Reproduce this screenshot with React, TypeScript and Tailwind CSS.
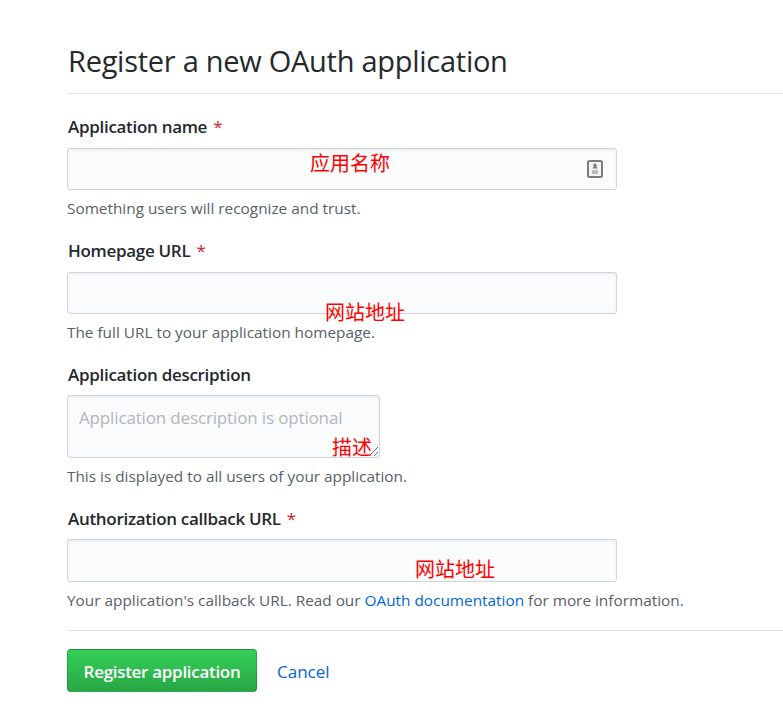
import { ReactNode } from "react";

const font = "font-['Open_Sans','Noto_Sans_CJK_SC',sans-serif]";

const Note = ({ className, children }: { className: string; children: ReactNode }) => (
  <span className={`absolute text-[20px] leading-[24px] whitespace-nowrap text-[#ff0000] font-['Noto_Sans_CJK_SC',sans-serif] ${className}`}>
    {children}
  </span>
);

const Label = ({ children, required }: { children: ReactNode; required?: boolean }) => (
  <div className="h-[24px] text-[17px] leading-[22px] font-semibold text-[#24292e] tracking-[-0.3px] pl-px">
    {children}
    {required && <span className="ml-[6px] font-normal text-[#cb2431]">*</span>}
  </div>
);

const Hint = ({ children }: { children: ReactNode }) => (
  <p className="mt-[8px] h-[20px] text-[15.35px] leading-[20px] text-[#586069] whitespace-nowrap">{children}</p>
);

const inputClass = "relative block border border-[#d1d5da] rounded-[3px] bg-[#fafbfc] shadow-[inset_0_1px_2px_rgba(27,31,35,0.075)]";

export default function App() {
  return (
    <div className={`${font} relative h-[722px] w-[783px] overflow-hidden bg-white pl-[67px] pt-[39px]`}>
      <h1 className="h-[55px] border-b border-[#e1e4e8] text-[29px] leading-[44px] font-normal text-[#24292e] tracking-[-0.27px] pl-px">
        Register a new OAuth application
      </h1>

      <section className="mt-[22px] h-[124px]">
        <Label required>Application name</Label>
        <div className={`${inputClass} mt-[8px] h-[42px] w-[550px]`}>
          <svg className="absolute right-[13px] top-[11px]" width="16" height="18" viewBox="0 0 16 18" fill="none">
            <rect x="1" y="1" width="14" height="16" rx="1.5" fill="#f3f4f4" stroke="#7d7d7d" strokeWidth="2" />
            <path d="M8 3.5a1.6 1.6 0 0 1 1.2 2.7c.5.4 1 1.2 1 2.3H5.8c0-1.100.5-1.900 1-2.300A1.600 1.600 0 0 1 8 3.500z" fill="#7d7d7d" />
            <rect x="5" y="10" width="6" height="4" fill="#bdbdbd" />
          </svg>
          <Note className="left-[242px] top-[2px]">应用名称</Note>
        </div>
        <Hint>Something users will recognize and trust.</Hint>
      </section>

      <section className="h-[124px]">
        <Label required>Homepage URL</Label>
        <div className={`${inputClass} mt-[8px] h-[42px] w-[550px]`}>
          <Note className="left-[257px] top-[27px]">网站地址</Note>
        </div>
        <Hint>The full URL to your application homepage.</Hint>
      </section>

      <section className="h-[144px]">
        <Label>Application description</Label>
        <div className={`${inputClass} mt-[7px] h-[63px] w-[313px]`}>
          <span className="absolute left-[11px] top-[9px] text-[17px] leading-[26px] text-[#b3b6ba] tracking-[-0.15px] whitespace-nowrap">
            Application description is optional
          </span>
          <Note className="left-[264px] top-[39px]">描述</Note>
          <svg className="absolute right-0 bottom-0" width="12" height="12" viewBox="0 0 12 12" stroke="#6b6b6b" strokeWidth="1">
            <path d="M2 11 11 2M7 11l4-4" />
          </svg>
        </div>
        <Hint>This is displayed to all users of your application.</Hint>
      </section>

      <section className="h-[122px]">
        <Label required>Authorization callback URL</Label>
        <div className={`${inputClass} mt-[7px] h-[43px] w-[550px]`}>
          <Note className="left-[347px] top-[17px]">网站地址</Note>
        </div>
        <Hint>
          Your application's callback URL. Read our <span className="text-[#0366d6]">OAuth documentation</span> for more information.
        </Hint>
      </section>

      <div className="flex items-center border-t border-[#e1e4e8] pt-[18px]">
        <button className="h-[43px] w-[190px] rounded-[4px] border border-[rgba(27,31,35,0.2)] bg-gradient-to-b from-[#34d058] to-[#28a745] pt-[2px] text-[17px] font-semibold text-white tracking-[-0.3px]">
          Register application
        </button>
        <span className="ml-[20px] pt-[2px] text-[17px] text-[#0366d6]">Cancel</span>
      </div>
    </div>
  );
}
